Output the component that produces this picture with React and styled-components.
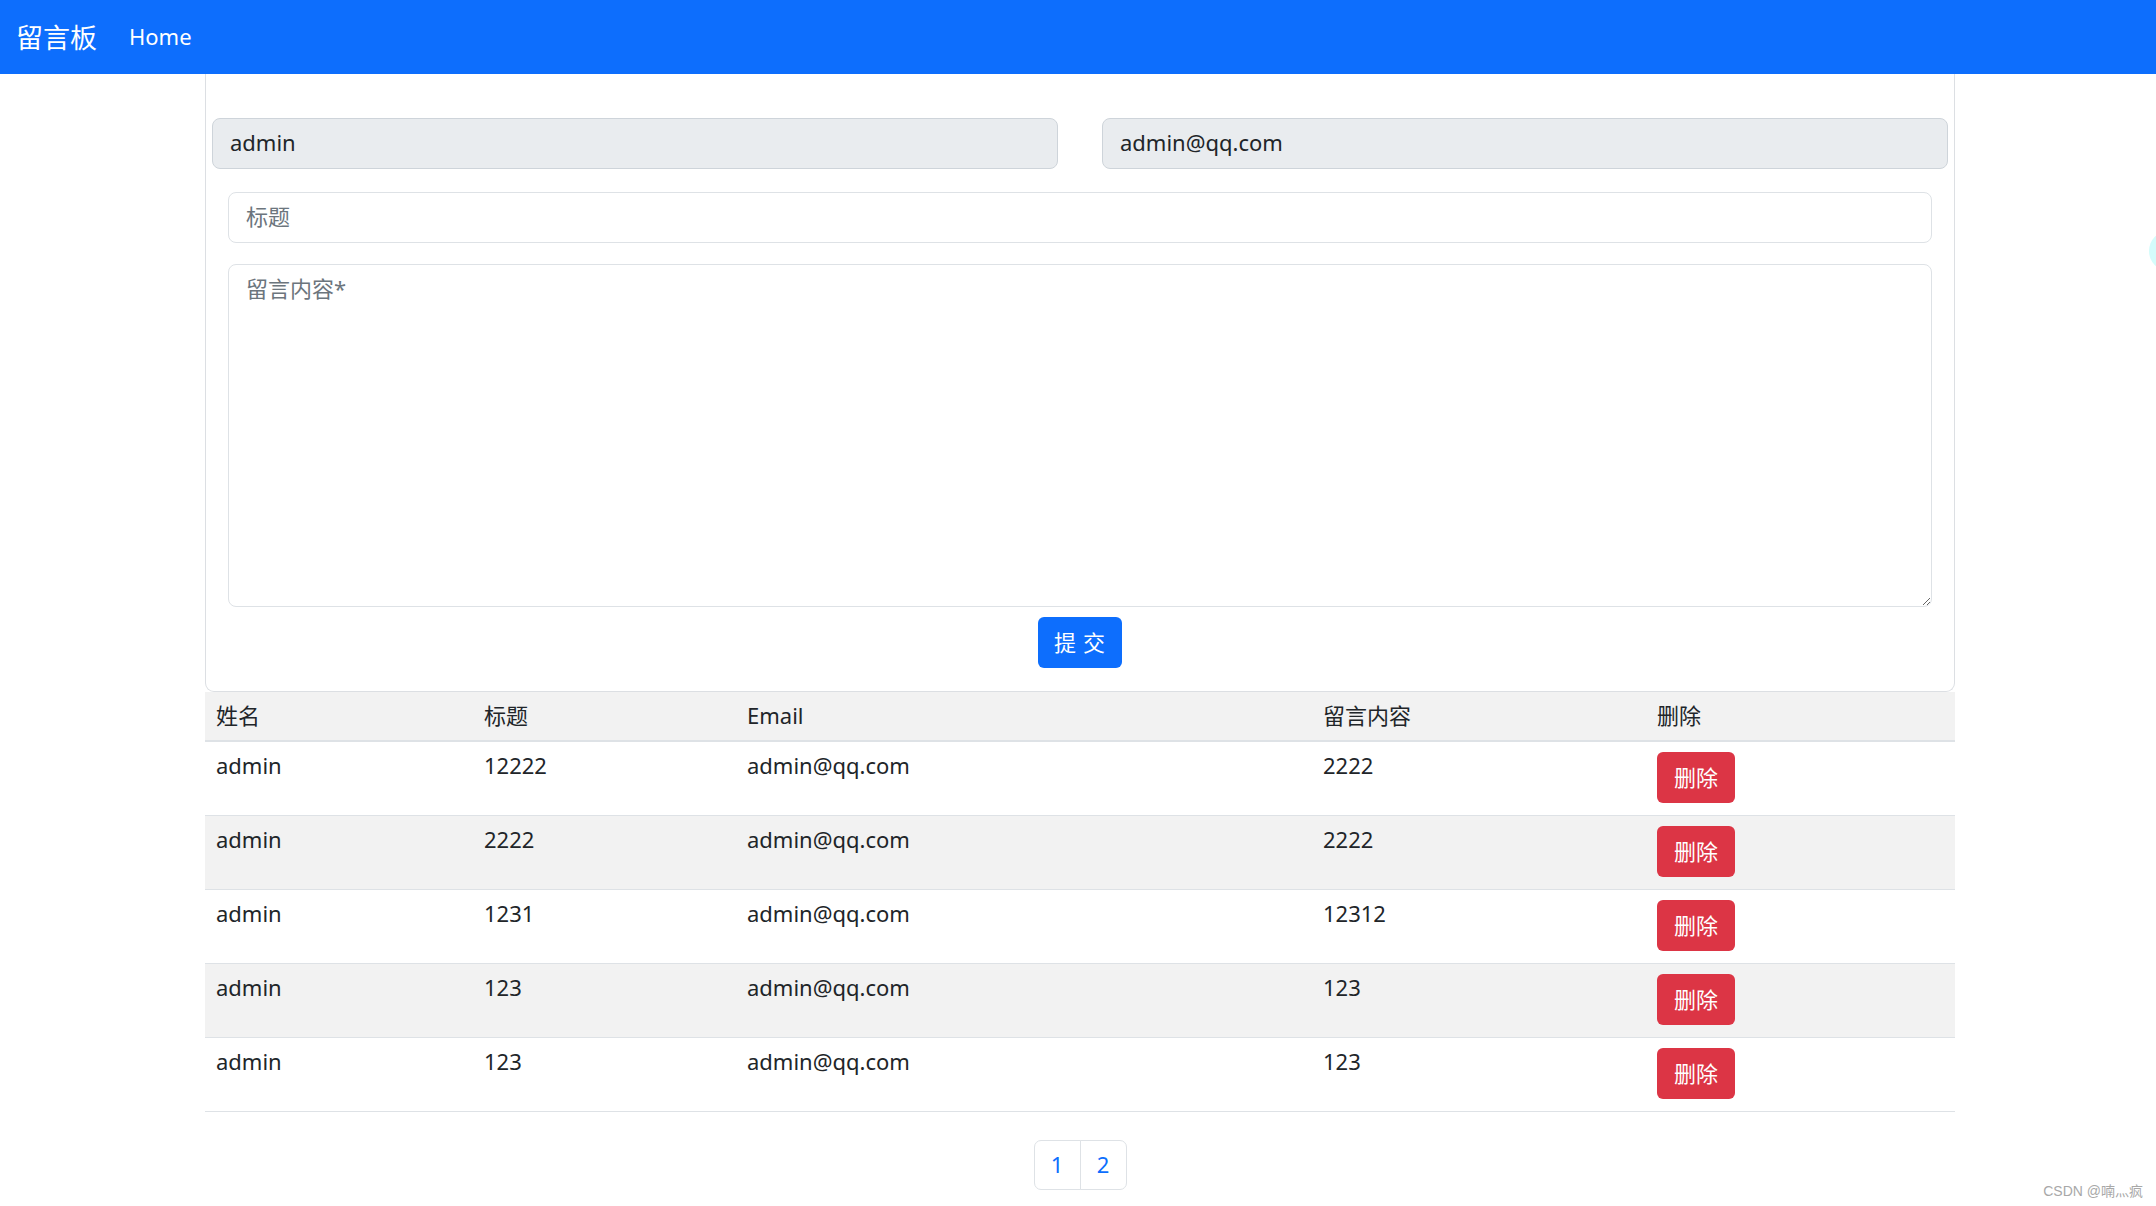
import React from "react";
import styled, { createGlobalStyle } from "styled-components";

const GlobalStyle = createGlobalStyle`
  html, body { margin: 0; padding: 0; background: #fff; }
  body {
    font-family: "Noto Sans", "Noto Sans CJK SC", sans-serif;
    color: #212529;
    font-size: 22px;
  }
  * { box-sizing: border-box; }
`;

const Page = styled.div`
  position: relative;
  width: 2156px;
  min-height: 1206px;
  overflow: hidden;
`;

const NavBar = styled.nav`
  height: 74px;
  background: #0d6efd;
  display: flex;
  align-items: center;
  padding-left: 16px;
  padding-bottom: 2px;
`;

const Brand = styled.a`
  color: #fff;
  font-size: 27px;
  font-family: "Noto Sans CJK SC", sans-serif;
  margin-right: 32px;
  text-decoration: none;
`;

const NavLink = styled.a`
  color: #fff;
  font-size: 22px;
  text-decoration: none;
`;

const Main = styled.main`
  width: 1750px;
  margin-left: 205px;
`;

const Card = styled.form`
  border: 1px solid #dcdfe3;
  border-top: none;
  border-radius: 0 0 9px 9px;
  height: 618px;
  padding: 44px 6px 0;
  display: flex;
  flex-direction: column;
  align-items: stretch;
`;

const InputRow = styled.div`
  display: flex;
  gap: 44px;
`;

const baseField = `
  font-family: "Noto Sans", "Noto Sans CJK SC", sans-serif;
  font-size: 22px;
  color: #212529;
  border: 1px solid #ced4da;
  border-radius: 8px;
  padding: 0 17px 3px;
  outline: none;
  &::placeholder { color: #6c757d; }
`;

const ReadInput = styled.input`
  ${baseField}
  flex: 1;
  height: 51px;
  background: #e9ecef;
`;

const Inner = styled.div`
  padding: 0 16px;
  display: flex;
  flex-direction: column;
`;

const TitleInput = styled.input`
  ${baseField}
  margin-top: 23px;
  height: 51px;
  background: #fff;
  border-color: #dee2e6;
`;

const ContentArea = styled.textarea`
  ${baseField}
  margin-top: 21px;
  height: 343px;
  background: #fff;
  border-color: #dee2e6;
  padding-top: 7px;
  line-height: 1.5;
  resize: vertical;
`;

const SubmitButton = styled.button`
  align-self: center;
  margin-top: 10px;
  height: 51px;
  padding: 0 16px 3px;
  background: #0d6efd;
  color: #fff;
  border: none;
  border-radius: 6px;
  font-family: "Noto Sans CJK SC", sans-serif;
  font-size: 22px;
  letter-spacing: 1px;
`;

const Table = styled.table`
  width: 1750px;
  border-collapse: collapse;
  table-layout: fixed;
`;

const HeadCell = styled.th`
  text-align: left;
  font-weight: 400;
  background: #f2f2f2;
  padding: 8px 11px 9px;
  line-height: 31px;
  border-bottom: 2px solid #dee2e6;
  font-family: "Noto Sans", "Noto Sans CJK SC", sans-serif;
`;

const Row = styled.tr`
  background: ${(p) => (p.$shaded ? "#f2f2f2" : "#fff")};
  border-bottom: 1px solid #dee2e6;
`;

const Cell = styled.td`
  vertical-align: top;
  padding: 9px 11px 13px;
  line-height: 28px;
  height: 73px;
`;

const ButtonCell = styled.td`
  vertical-align: top;
  padding: 10px 11px 12px;
  height: 73px;
`;

const DeleteButton = styled.button`
  height: 51px;
  width: 78px;
  background: #dc3545;
  color: #fff;
  border: none;
  border-radius: 6px;
  font-family: "Noto Sans CJK SC", sans-serif;
  font-size: 22px;
  padding: 0 0 3px;
`;

const Pager = styled.ul`
  list-style: none;
  margin: 28px 0 0;
  padding: 0;
  display: flex;
  justify-content: center;
`;

const PageItem = styled.li`
  width: 47px;
  height: 50px;
  display: flex;
  align-items: center;
  justify-content: center;
  color: #0d6efd;
  border: 1px solid #dee2e6;
  margin-left: ${(p) => (p.$first ? "0" : "-1px")};
  border-radius: ${(p) => (p.$first ? "7px 0 0 7px" : "0 7px 7px 0")};
  font-size: 22px;
  padding-bottom: 2px;
`;

const Watermark = styled.div`
  position: absolute;
  right: 13px;
  bottom: 6px;
  font-family: "Liberation Sans", "Noto Sans CJK SC", sans-serif;
  font-size: 14px;
  color: #a8a8a8;
`;

const Bubble = styled.div`
  position: absolute;
  left: 2149px;
  top: 231px;
  width: 40px;
  height: 40px;
  border-radius: 50%;
  background: #d4fcfb;
`;

const rows = [
  { name: "admin", title: "12222", email: "admin@qq.com", content: "2222" },
  { name: "admin", title: "2222", email: "admin@qq.com", content: "2222" },
  { name: "admin", title: "1231", email: "admin@qq.com", content: "12312" },
  { name: "admin", title: "123", email: "admin@qq.com", content: "123" },
  { name: "admin", title: "123", email: "admin@qq.com", content: "123" },
];

export default function App() {
  return (
    <Page>
      <GlobalStyle />
      <NavBar>
        <Brand>留言板</Brand>
        <NavLink>Home</NavLink>
      </NavBar>
      <Main>
        <Card onSubmit={(e) => e.preventDefault()}>
          <InputRow>
            <ReadInput readOnly defaultValue="admin" />
            <ReadInput readOnly defaultValue="admin@qq.com" />
          </InputRow>
          <Inner>
            <TitleInput placeholder="标题" />
            <ContentArea placeholder="留言内容*" />
            <SubmitButton type="submit">提 交</SubmitButton>
          </Inner>
        </Card>
        <Table>
          <colgroup>
            <col style={{ width: "268px" }} />
            <col style={{ width: "263px" }} />
            <col style={{ width: "576px" }} />
            <col style={{ width: "334px" }} />
            <col style={{ width: "309px" }} />
          </colgroup>
          <thead>
            <tr>
              <HeadCell>姓名</HeadCell>
              <HeadCell>标题</HeadCell>
              <HeadCell>Email</HeadCell>
              <HeadCell>留言内容</HeadCell>
              <HeadCell>删除</HeadCell>
            </tr>
          </thead>
          <tbody>
            {rows.map((r, i) => (
              <Row key={i} $shaded={i % 2 === 1}>
                <Cell>{r.name}</Cell>
                <Cell>{r.title}</Cell>
                <Cell>{r.email}</Cell>
                <Cell>{r.content}</Cell>
                <ButtonCell>
                  <DeleteButton>删除</DeleteButton>
                </ButtonCell>
              </Row>
            ))}
          </tbody>
        </Table>
        <Pager>
          <PageItem $first>1</PageItem>
          <PageItem>2</PageItem>
        </Pager>
      </Main>
      <Bubble />
      <Watermark>CSDN @喃灬疯</Watermark>
    </Page>
  );
}
